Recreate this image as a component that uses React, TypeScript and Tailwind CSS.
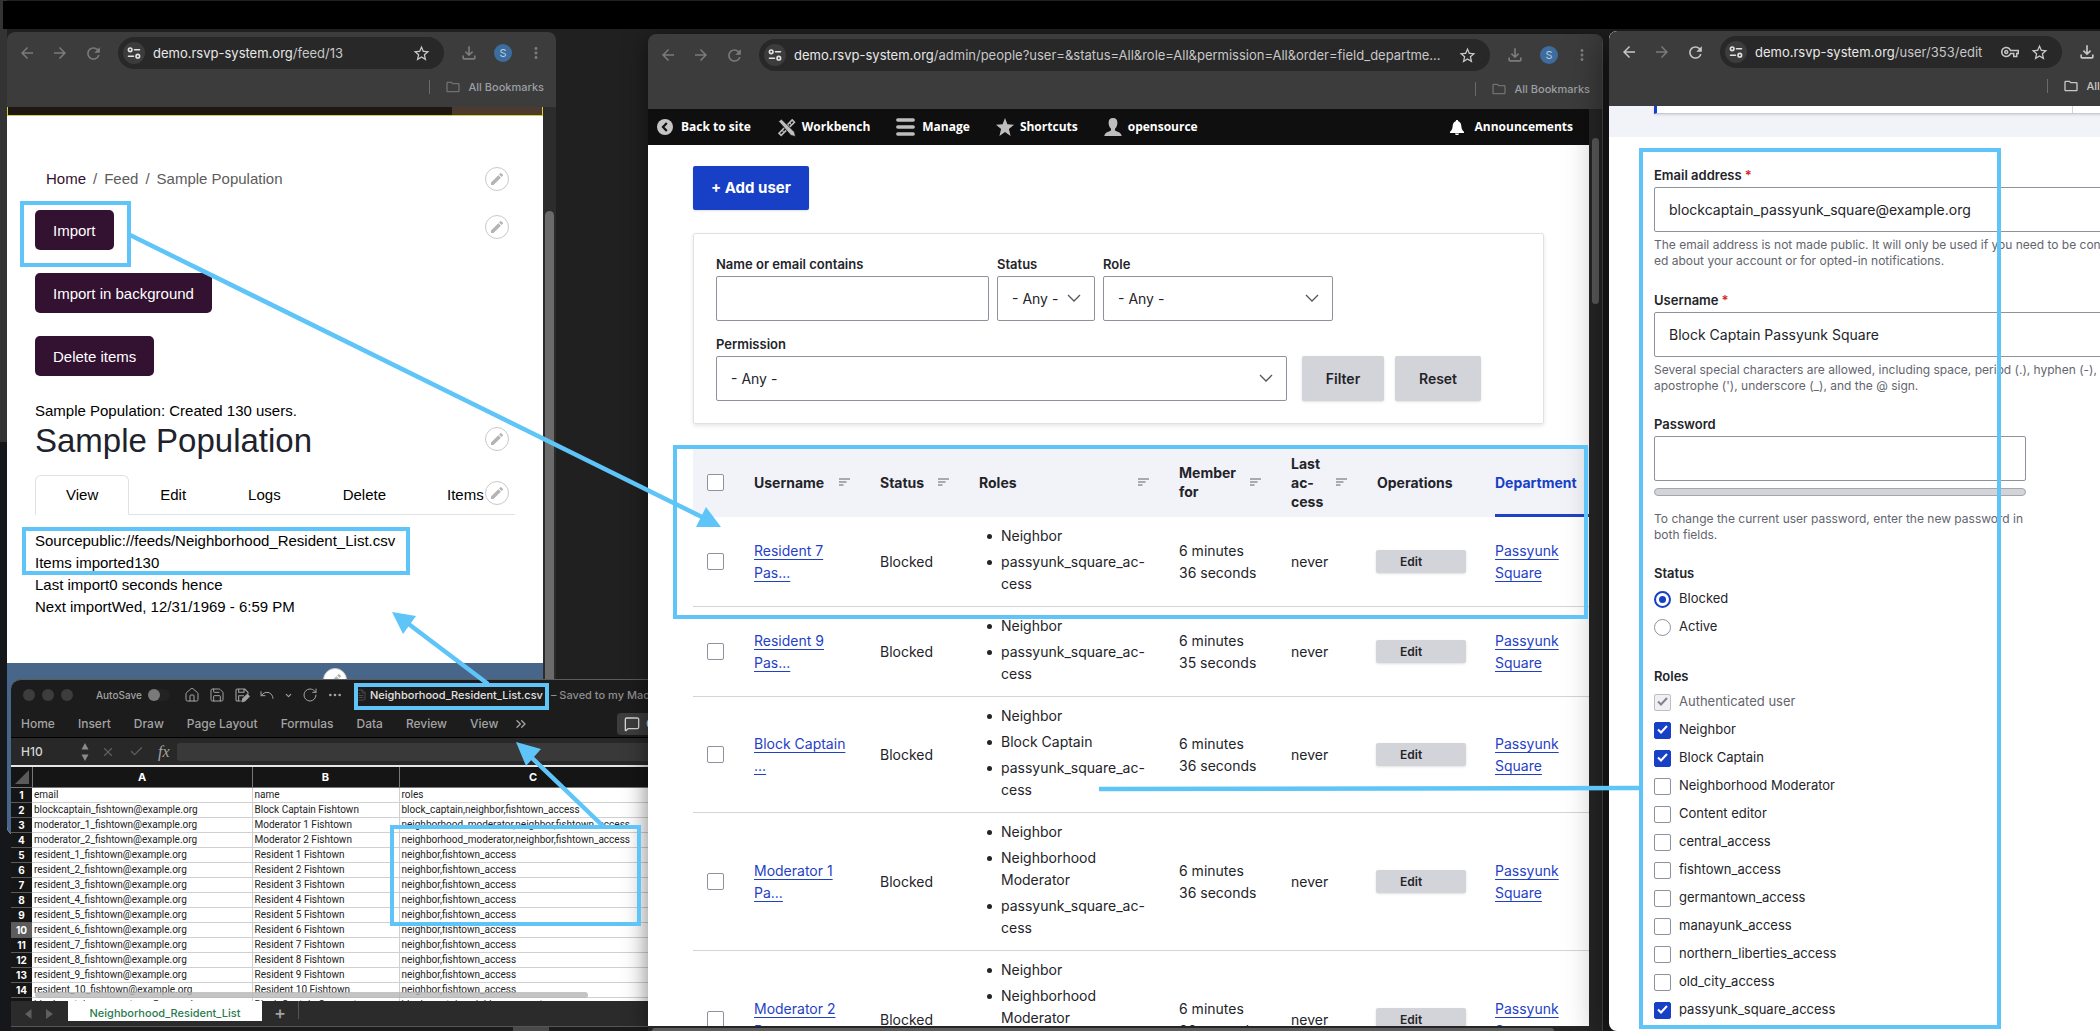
import type { ReactNode } from "react";
import {
    MdArrowBack,
    MdArrowForward,
    MdRefresh,
    MdStarBorder,
    MdOutlineFileDownload,
    MdMoreVert,
    MdOutlineFolder,
    MdOutlineVpnKey,
    MdEdit,
} from "react-icons/md";
import { House, Save, Undo, ChevronDown, RotateCw, Ellipsis, ChevronsRight, MessageSquare, X, Check, FileText } from "lucide-react";

const users = [
    { name: "Resident 7 Pas...", roles: ["Neighbor", "passyunk_square_ac-cess"], member: "6 minutes 36 seconds" },
    { name: "Resident 9 Pas...", roles: ["Neighbor", "passyunk_square_ac-cess"], member: "6 minutes 35 seconds" },
    { name: "Block Captain ...", roles: ["Neighbor", "Block Captain", "passyunk_square_ac-cess"], member: "6 minutes 36 seconds" },
    { name: "Moderator 1 Pa...", roles: ["Neighbor", "Neighborhood Moderator", "passyunk_square_ac-cess"], member: "6 minutes 36 seconds" },
    { name: "Moderator 2 Pa...", roles: ["Neighbor", "Neighborhood Moderator", "passyunk_square_ac-cess"], member: "6 minutes 36 seconds" },
];

const roles = [
    { name: "Authenticated user", checked: true, disabled: true },
    { name: "Neighbor", checked: true },
    { name: "Block Captain", checked: true },
    { name: "Neighborhood Moderator" },
    { name: "Content editor" },
    { name: "central_access" },
    { name: "fishtown_access" },
    { name: "germantown_access" },
    { name: "manayunk_access" },
    { name: "northern_liberties_access" },
    { name: "old_city_access" },
    { name: "passyunk_square_access", checked: true },
];

const sheet = [
    ["email", "name", "roles"],
    ["blockcaptain_fishtown@example.org", "Block Captain Fishtown", "block_captain,neighbor,fishtown_access"],
    ["moderator_1_fishtown@example.org", "Moderator 1 Fishtown", "neighborhood_moderator,neighbor,fishtown_access"],
    ["moderator_2_fishtown@example.org", "Moderator 2 Fishtown", "neighborhood_moderator,neighbor,fishtown_access"],
    ["resident_1_fishtown@example.org", "Resident 1 Fishtown", "neighbor,fishtown_access"],
    ["resident_2_fishtown@example.org", "Resident 2 Fishtown", "neighbor,fishtown_access"],
    ["resident_3_fishtown@example.org", "Resident 3 Fishtown", "neighbor,fishtown_access"],
    ["resident_4_fishtown@example.org", "Resident 4 Fishtown", "neighbor,fishtown_access"],
    ["resident_5_fishtown@example.org", "Resident 5 Fishtown", "neighbor,fishtown_access"],
    ["resident_6_fishtown@example.org", "Resident 6 Fishtown", "neighbor,fishtown_access"],
    ["resident_7_fishtown@example.org", "Resident 7 Fishtown", "neighbor,fishtown_access"],
    ["resident_8_fishtown@example.org", "Resident 8 Fishtown", "neighbor,fishtown_access"],
    ["resident_9_fishtown@example.org", "Resident 9 Fishtown", "neighbor,fishtown_access"],
    ["resident_10_fishtown@example.org", "Resident 10 Fishtown", "neighbor,fishtown_access"],
    ["blockcaptain_germantown@example.org", "Block Captain Germantown", "block_captain,neighbor,germantown_access"],
];

function SiteInfoIcon() {
    return (
        <svg viewBox="0 0 14 14" className="size-[14px]" fill="none" stroke="#e3e3e3" strokeWidth="1.6" strokeLinecap="round">
            <circle cx="3.2" cy="3.8" r="1.8" />
            <path d="M7.5 3.8h5M1.5 10.2h5" />
            <circle cx="10.8" cy="10.2" r="1.8" />
        </svg>
    );
}

function BrowserBar({ path, active, withKey }: { path: string; active?: boolean; withKey?: boolean }) {
    return (
        <header className={`shrink-0 rounded-t-lg bg-[#3c3c3c] pt-[5px] pb-0.5 ${active ? "text-[#c7c7c7]" : "text-[#7b7b7b]"}`}>
            <div className="flex h-8 items-center gap-[15px] px-[11px]">
                <button aria-label="Back"><MdArrowBack size={18} /></button>
                <button aria-label="Forward" className="text-[#7b7b7b]"><MdArrowForward size={18} /></button>
                <button aria-label="Reload"><MdRefresh size={19} /></button>
                <div className="flex h-8 min-w-0 flex-1 items-center rounded-full bg-[#282828] pr-[13px] pl-[5px] text-[#c7c7c7]">
                    <span className="mr-2 flex size-[22px] shrink-0 items-center justify-center rounded-full bg-[#3c3c3c]"><SiteInfoIcon /></span>
                    <p className="min-w-0 flex-1 truncate pt-px text-[13px]">
                        <span className="text-[#e8e8e8]">demo.rsvp-system.org</span>{path}
                    </p>
                    {withKey && <button aria-label="Passwords" className="ml-3"><MdOutlineVpnKey size={18} /></button>}
                    <button aria-label="Bookmark" className="ml-[11px]"><MdStarBorder size={19} /></button>
                </div>
                <button aria-label="Downloads"><MdOutlineFileDownload size={20} /></button>
                <button className="flex size-[18px] shrink-0 items-center justify-center rounded-full bg-[#3d6d9e] text-[11px] text-[#b9cbe0]">S</button>
                <button aria-label="Menu"><MdMoreVert size={18} /></button>
            </div>
            <div className="flex h-9 items-center justify-end pr-3">
                <span className="mr-[15px] h-[14px] w-px bg-[#6a6a6a]"></span>
                <button className={`flex items-center gap-2 text-[11px] font-medium whitespace-nowrap ${active ? "text-[#c7c7c7]" : "text-[#9b9fa3]"}`}>
                    <MdOutlineFolder size={16} className={active ? "text-[#c7c7c7]" : "text-[#707070]"} />
                    All Bookmarks
                </button>
            </div>
        </header>
    );
}

function Pencil({ className }: { className: string }) {
    return (
        <button aria-label="Configure block" className={`flex size-6 shrink-0 items-center justify-center rounded-full border border-[#c9c9c9] bg-white text-[#b4b4b4] ${className}`}>
            <MdEdit size={16} />
        </button>
    );
}

function FeedWindow() {
    const button = "block h-10 rounded-[5px] bg-[#331131] px-[18px] pt-0.5 text-white";
    const tab = "flex items-center px-[31px]";
    return (
        <section className="absolute top-8 left-[7px] flex h-[803px] w-[549px] flex-col overflow-hidden rounded-lg bg-[#2c2c2c] font-['Inter',sans-serif]">
            <BrowserBar path="/feed/13" />
            <div className="flex min-h-0 flex-1">
                <main className="flex min-w-0 flex-1 flex-col bg-white font-['Liberation_Sans',Arial,sans-serif] text-[15px] leading-[22px] text-black">
                    <div className="flex h-[9px] justify-end border-x border-b border-[#d5cf3c] bg-[#1f1712]">
                        <span className="w-[90px] bg-[#4c3a2f]"></span>
                    </div>
                    <div className="px-7">
                        <nav className="mt-[51px] flex h-6 items-center gap-[7px] pl-[11px] text-[#5c5c5c]">
                            <a href="#home" className="text-[#331131]">Home</a>
                            <span>/</span>
                            <span>Feed</span>
                            <span>/</span>
                            <span>Sample Population</span>
                            <Pencil className="mr-[6px] ml-auto" />
                        </nav>
                        <div className="mt-[19px] flex items-start justify-between">
                            <button className={button}>Import</button>
                            <Pencil className="mt-[5px] mr-[6px]" />
                        </div>
                        <button className={`${button} mt-[23px]`}>Import in background</button>
                        <button className={`${button} mt-[23px]`}>Delete items</button>
                        <p className="mt-6">Sample Population: Created 130 users.</p>
                        <div className="flex items-start justify-between">
                            <h1 className="text-[33px] leading-[38px] text-[#20222b]">Sample Population</h1>
                            <Pencil className="mt-[5px] mr-[6px]" />
                        </div>
                        <nav className="relative mt-[15px] flex h-10 border-b border-[#dee2e6]">
                            <a href="#view" className="-mb-px flex items-center rounded-t-md border border-[#dee2e6] border-b-white bg-white px-[30px]">View</a>
                            <a href="#edit" className={tab}>Edit</a>
                            <a href="#logs" className={tab}>Logs</a>
                            <a href="#delete" className={tab}>Delete</a>
                            <a href="#items" className="flex items-center pl-[30px]">Items</a>
                            <Pencil className="absolute top-1.5 right-[6px]" />
                        </nav>
                        <div className="mt-[15px]">
                            <p>Sourcepublic://feeds/Neighborhood_Resident_List.csv</p>
                            <p>Items imported130</p>
                            <p>Last import0 seconds hence</p>
                            <p>Next importWed, 12/31/1969 - 6:59 PM</p>
                        </div>
                    </div>
                    <footer className="mt-[45px] flex flex-1 justify-center bg-[#48658a] pt-[5px] pl-[120px]">
                        <Pencil className="" />
                    </footer>
                </main>
                <div className="w-[13px] px-[2px] pt-[104px]">
                    <div className="h-full rounded-full bg-[#6b6b6b]"></div>
                </div>
            </div>
        </section>
    );
}

function SheetWindow() {
    return (
        <section className="absolute top-[679px] bottom-0 left-[11px] flex w-[656px] flex-col overflow-hidden rounded-t-[10px] border-t border-[#5c5c5c] bg-[#1c1c1c] font-['Inter',sans-serif] text-[12px] font-medium text-[#a3a3a3]">
            <div className="flex h-[30px] shrink-0 items-center pl-3 whitespace-nowrap">
                <div className="flex gap-[7px]">
                    <span className="size-3 rounded-full bg-[#3d3d3d]"></span>
                    <span className="size-3 rounded-full bg-[#3d3d3d]"></span>
                    <span className="size-3 rounded-full bg-[#3d3d3d]"></span>
                </div>
                <label className="ml-[23px] flex w-[88px] items-center gap-1.5 text-[10px]">
                    AutoSave
                    <input type="checkbox" className="h-3 w-[22px] appearance-none rounded-full bg-[#222] before:block before:size-3 before:rounded-full before:bg-[#7a7a7a]" />
                </label>
                <div className="flex items-center gap-[9px]">
                    <House size={16} strokeWidth={1.5} />
                    <Save size={16} strokeWidth={1.5} />
                    <svg viewBox="0 0 24 24" className="size-4" fill="none" stroke="currentColor" strokeWidth="1.6" strokeLinejoin="round">
                        <path d="M10 21H5a2 2 0 0 1-2-2V5a2 2 0 0 1 2-2h11l5 5v3M7 3v5h8V3M7 21v-8h8" />
                        <path d="M12 22l1-4 7-7 3 3-7 7z" fill="currentColor" />
                    </svg>
                    <Undo size={16} strokeWidth={1.5} />
                    <ChevronDown size={9} strokeWidth={3} />
                    <RotateCw size={16} strokeWidth={1.5} />
                    <Ellipsis size={16} />
                </div>
                <FileText size={12} className="ml-3 text-[#4a4a4a]" />
                <span className="ml-[3px] text-[11px] text-[#e2e2e2]">Neighborhood_Resident_List.csv</span>
                <span className="ml-2 text-[11px] text-[#8e8e8e]">– Saved to my Mac</span>
            </div>
            <nav className="flex h-[27px] shrink-0 items-center gap-[23px] pl-[10px] whitespace-nowrap">
                <button>Home</button>
                <button>Insert</button>
                <button>Draw</button>
                <button>Page Layout</button>
                <button>Formulas</button>
                <button>Data</button>
                <button>Review</button>
                <button>View</button>
                <button aria-label="More tabs" className="-ml-2"><ChevronsRight size={16} /></button>
                <button className="ml-auto flex h-[22px] w-[50px] items-center gap-1.5 overflow-hidden rounded-l bg-[#3d3d3d] pl-[7px] text-[#d5d5d5]">
                    <MessageSquare size={16} className="shrink-0" />
                    Comments
                </button>
            </nav>
            <div className="flex h-7 shrink-0 items-center border-t border-black bg-[#282828] pl-[10px]">
                <span className="w-[60px] text-[#d5d5d5]">H10</span>
                <svg viewBox="0 0 8 18" className="h-[18px] w-2" fill="#8a8a8a"><path d="M4 0l3.5 6.5h-7zM4 18l3.5-6.5h-7z" /></svg>
                <X size={14} className="ml-3 text-[#5f5f5f]" />
                <Check size={15} className="ml-3.5 text-[#5f5f5f]" />
                <span className="ml-3.5 font-['Liberation_Serif',serif] text-[16px] italic">fx</span>
                <input aria-label="Formula" className="ml-[7px] h-[18px] flex-1 rounded-[3px] bg-[#393939]" />
            </div>
            <div className="relative min-h-0 flex-1 overflow-hidden border-t-2 border-[#e6e6e6] bg-white">
                <table className="w-full table-fixed border-collapse font-['Roboto',sans-serif] text-[10px] leading-[14px] font-normal text-[#222]">
                    <thead>
                        <tr className="h-5 bg-[#151515] font-['Inter',sans-serif] text-[11px] text-white">
                            <th className="w-[21px] border-r border-b border-[#777]"><svg viewBox="0 0 14 14" className="ml-1 size-[14px]" fill="#5a5a5a"><path d="M14 0v14H0z" /></svg></th>
                            <th className="w-[220px] border-r border-b border-[#777] font-bold">A</th>
                            <th className="w-[147px] border-r border-b border-[#777] font-bold">B</th>
                            <th className="border-b border-[#777] font-bold">C</th>
                        </tr>
                    </thead>
                    <tbody>
                        {sheet.map((row, i) => (
                            <tr key={i} className="h-[15px]">
                                <th className={`border-b border-[#5a5a5a] font-['Inter',sans-serif] font-bold text-white ${i === 9 ? "bg-[#5c5c5c]" : "bg-[#151515]"}`}>{i + 1}</th>
                                {row.map((cell, j) => (
                                    <td key={j} className="border-r border-b border-[#d0d0d0] pl-0.5 whitespace-nowrap">{cell}</td>
                                ))}
                            </tr>
                        ))}
                    </tbody>
                </table>
                <div className="absolute bottom-[3px] left-6 h-[6px] w-[553px] rounded-full bg-[#b5b5b5]/80"></div>
            </div>
            <div className="flex h-[25px] shrink-0 items-start bg-[#2b2b2b]">
                <svg viewBox="0 0 28 10" className="mt-2 ml-[14px] h-[10px] w-7" fill="#5f5f5f"><path d="M6.5 0v10L0 5zM21 0v10l7-5z" /></svg>
                <button className="ml-[15px] h-5 w-[194px] bg-white pt-1 text-[11px] text-[#2c7a4f]">Neighborhood_Resident_List</button>
                <button className="ml-3 h-6 text-[18px] leading-6">+</button>
                <span className="ml-3 h-[18px] w-px bg-[#555]"></span>
            </div>
            <div className="flex h-[5px] shrink-0 justify-end border-t border-[#555] bg-[#1c1c1c] pr-[118px]">
                <span className="w-9 bg-[#4a4a4a]"></span>
            </div>
        </section>
    );
}

function SelectBox({ id, label, className }: { id: string; label: string; className: string }) {
    return (
        <div className={className}>
            <label htmlFor={id} className="block text-[13px] leading-6 font-semibold">{label}</label>
            <div className="relative">
                <select id={id} className="h-[45px] w-full appearance-none rounded-[2px] border border-[#8e929c] bg-white px-3.5 text-[14px]">
                    <option>- Any -</option>
                </select>
                <svg viewBox="0 0 14 8" className="pointer-events-none absolute top-[18px] right-[14px] h-2 w-[14px]" fill="none" stroke="#545560" strokeWidth="1.3"><path d="M1 1l6 6 6-6" /></svg>
            </div>
        </div>
    );
}

function HeadCell({ children, sortable, className }: { children: ReactNode; sortable?: boolean; className: string }) {
    return (
        <th className={`h-[70px] px-[15px] text-left font-bold ${className}`}>
            <div className="flex items-center justify-between">
                <span>{children}</span>
                {sortable && (
                    <svg viewBox="0 0 11 8" className="h-2 w-[11px]" stroke="#8e929c" strokeWidth="1.4"><path d="M0 1h11M0 4h7.5M0 7h4.5" /></svg>
                )}
            </div>
        </th>
    );
}

function PeopleWindow() {
    const box = "block size-[17px] appearance-none rounded-[2px] border border-[#8e929c] bg-white";
    const link = "text-[#1f41c5] underline underline-offset-[3px]";
    return (
        <section className="absolute top-[34px] bottom-0 left-[648px] flex w-[955px] flex-col overflow-hidden rounded-t-lg border-r border-[#4a4a4a] bg-[#262626] font-['Inter',sans-serif] text-[#232429] shadow-[0_4px_24px_rgba(0,0,0,0.5)]">
            <BrowserBar path="/admin/people?user=&status=All&role=All&permission=All&order=field_departme..." />
            <div className="flex min-h-0 flex-1">
                <div className="flex min-w-0 flex-1 flex-col overflow-hidden bg-white">
                    <nav className="flex h-9 shrink-0 items-center bg-[#0f0f0f] pr-4 pl-[9px] font-['Open_Sans','Noto_Sans',sans-serif] text-[12px] font-bold text-white">
                        <a href="#site" className="flex items-center gap-2">
                            <svg viewBox="0 0 16 16" className="size-4"><circle cx="8" cy="8" r="8" fill="#c4c4c4" /><path d="M9.8 4L6 8l3.8 4" fill="none" stroke="#0f0f0f" strokeWidth="2.2" /></svg>
                            Back to site
                        </a>
                        <a href="#workbench" className="ml-[26px] flex items-center gap-[6px]">
                            <svg viewBox="0 0 19 19" className="size-[19px]" fill="none" stroke="#bebebe">
                                <path d="M2 15.2L15.2 2l2.2 2.2L4.2 17.4z" strokeWidth="1.6" />
                                <path d="M12.5 4.7l1.6 1.6M10.5 6.7l1.6 1.6M5 12.2l1.6 1.6" strokeWidth="1.2" />
                                <path d="M1.5 3.2l3-2L17.5 14l1 4.5-4.5-1z" fill="#bebebe" stroke="#0f0f0f" strokeWidth="0.8" />
                            </svg>
                            Workbench
                        </a>
                        <a href="#manage" className="ml-[26px] flex items-center gap-[7px]">
                            <svg viewBox="0 0 19 18" className="h-[18px] w-[19px]" stroke="#bebebe" strokeWidth="3.4" strokeLinecap="round"><path d="M1.8 2h15.4M1.8 9h15.4M1.8 16h15.4" /></svg>
                            Manage
                        </a>
                        <a href="#shortcuts" className="ml-[26px] flex items-center gap-[6px]">
                            <svg viewBox="0 0 18 18" className="size-[18px]" fill="#bebebe"><path d="M9 0l2.4 6.3 6.6.4-5.1 4.2L14.6 18 9 14.1 3.4 18l1.7-7.1L0 6.7l6.6-.4z" /></svg>
                            Shortcuts
                        </a>
                        <a href="#account" className="ml-[26px] flex items-center gap-[6px]">
                            <svg viewBox="0 0 18 18" className="size-[18px]" fill="#bebebe"><path d="M9 0c3 0 4.4 2 4.4 4.8 0 2.500-1 4.600-2.200 5.700-.5.600-.3 2 .5 2.400 2.300 1 5.700 1.500 6 5.100H.3c.3-3.600 3.700-4.100 6-5.100.8-.4 1-1.800.5-2.400C5.600 9.400 4.600 7.300 4.600 4.800 4.600 2 6 0 9 0z" /></svg>
                            opensource
                        </a>
                        <a href="#announcements" className="ml-auto flex items-center gap-[11px]">
                            <svg viewBox="0 0 14 15" className="h-[15px] w-[14px]" fill="#fff"><path d="M7 0c.8 0 1.200.5 1.200 1.200C10.600 2 11.200 4 11.400 6.500c.2 2.500.9 4 2.600 5.200V13H0v-1.300c1.700-1.200 2.400-2.700 2.600-5.200C2.800 4 3.400 2 5.800 1.200 5.800.5 6.200 0 7 0zM5 13.500h4c0 1-.9 1.500-2 1.500s-2-.5-2-1.500z" /></svg>
                            Announcements
                        </a>
                    </nav>
                    <main className="shrink-0 pt-[21px] pl-[45px]">
                        <button className="h-11 rounded-[2px] bg-[#1740c6] px-[18px] text-[15px] font-bold text-white shadow-sm">+ Add user</button>
                        <form className="mt-[23px] mr-[45px] rounded-[2px] border border-[#e0e1e4] px-[22px] pt-[18px] pb-[22px] shadow-[0_2px_4px_rgba(0,0,0,0.1)]">
                            <div className="flex gap-2">
                                <div className="w-[273px]">
                                    <label htmlFor="name" className="block text-[13px] leading-6 font-semibold">Name or email contains</label>
                                    <input id="name" className="h-[45px] w-full rounded-[2px] border border-[#8e929c] px-3.5 text-[14px]" />
                                </div>
                                <SelectBox id="status" label="Status" className="w-[98px]" />
                                <SelectBox id="role" label="Role" className="w-[230px]" />
                            </div>
                            <div className="mt-[11px] flex items-end">
                                <SelectBox id="permission" label="Permission" className="w-[571px]" />
                                <button type="button" className="ml-[15px] h-[45px] w-[82px] rounded-[2px] bg-[#d3d4d9] text-[14px] font-semibold shadow-sm">Filter</button>
                                <button type="button" className="ml-[11px] h-[45px] w-[86px] rounded-[2px] bg-[#d3d4d9] text-[14px] font-semibold shadow-sm">Reset</button>
                            </div>
                        </form>
                        <table className="mt-[23px] w-[935px] table-fixed border-collapse text-[14px] leading-[22px]">
                            <thead className="bg-[#f2f3f9] leading-[19px]">
                                <tr>
                                    <th className="w-[46px] pl-[14px]"><input type="checkbox" aria-label="Select all" className={box} /></th>
                                    <HeadCell sortable className="w-[126px]">Username</HeadCell>
                                    <HeadCell sortable className="w-[99px]">Status</HeadCell>
                                    <HeadCell sortable className="w-[200px]">Roles</HeadCell>
                                    <HeadCell sortable className="w-[112px]">Member<br />for</HeadCell>
                                    <HeadCell sortable className="w-[86px]">Last<br />ac-<br />cess</HeadCell>
                                    <HeadCell className="w-[118px]">Operations</HeadCell>
                                    <th className="px-[15px] text-left font-bold text-[#1740c6]">
                                        <a href="#department" className="flex h-[70px] items-center border-b-3 border-[#1f41c5] pt-[3px]">Department</a>
                                    </th>
                                </tr>
                            </thead>
                            <tbody>
                                {users.map((user) => (
                                    <tr key={user.name} className="border-b border-[#d3d4d9]">
                                        <td className="pl-[14px]"><input type="checkbox" aria-label={user.name} className={box} /></td>
                                        <td className="px-[15px]"><a href="#user" className={link}>{user.name}</a></td>
                                        <td className="px-[15px]">Blocked</td>
                                        <td className="pt-2 pr-3 pb-[11px] pl-[15px]">
                                            <ul className="space-y-1 pl-[22px]">
                                                {user.roles.map((role) => (
                                                    <li key={role} className="relative before:absolute before:top-[9px] before:-left-[14px] before:size-[5px] before:rounded-full before:bg-[#232429]">
                                                        {role.includes("-") ? <>passyunk_square_ac-<br />cess</> : role}
                                                    </li>
                                                ))}
                                            </ul>
                                        </td>
                                        <td className="px-[15px]">{user.member}</td>
                                        <td className="px-[15px]">never</td>
                                        <td className="px-[14px]"><button className="block h-[23px] w-full rounded-[2px] bg-[#d3d4d9] pl-6 text-left text-[12px] font-semibold shadow-sm">Edit</button></td>
                                        <td className="pr-12 pl-[15px]"><a href="#department" className={link}>Passyunk Square</a></td>
                                    </tr>
                                ))}
                            </tbody>
                        </table>
                    </main>
                </div>
                <div className="w-[13px] px-[3px] pt-[29px]">
                    <div className="h-[166px] rounded-full bg-[#5c5c5c]"></div>
                </div>
            </div>
            <div className="h-[5px] shrink-0 pt-0.5 pr-12 pl-1">
                <div className="h-full rounded-t bg-[#5c5c5c]"></div>
            </div>
        </section>
    );
}

function UserWindow() {
    const label = "block text-[13px] leading-6 font-semibold";
    const input = "block h-[45px] rounded-[2px] border border-[#8e929c] px-3.5 text-[14px]";
    const help = "text-[12px] leading-4 whitespace-nowrap text-[#63656e]";
    return (
        <section className="absolute top-[31px] bottom-0 left-[1609px] flex w-[565px] flex-col overflow-hidden rounded-t-lg rounded-b-lg bg-white font-['Inter',sans-serif] text-[#232429] shadow-[0_8px_40px_rgba(0,0,0,0.6)]">
            <BrowserBar path="/user/353/edit" active withKey />
            <div className="h-[31px] shrink-0 bg-[#f2f3f9] pl-[45px]">
                <div className="flex h-2 border-b border-l-3 border-b-[#c9cbd2] border-l-[#1740c6] bg-white shadow">
                    <span className="w-[416px] border-r border-[#d3d4d9]"></span>
                </div>
            </div>
            <form className="pt-[26px] pl-[45px]">
                <label htmlFor="mail" className={label}>Email address<span className="ml-[3px] text-[#d72222]">*</span></label>
                <input id="mail" defaultValue="blockcaptain_passyunk_square@example.org" className={`${input} w-full`} />
                <p className={`${help} mt-[5px]`}>The email address is not made public. It will only be used if you need to be contact-<br />ed about your account or for opted-in notifications.</p>
                <label htmlFor="username" className={`${label} mt-[19px]`}>Username<span className="ml-[3px] text-[#d72222]">*</span></label>
                <input id="username" defaultValue="Block Captain Passyunk Square" className={`${input} w-full`} />
                <p className={`${help} mt-[5px]`}>Several special characters are allowed, including space, period (.), hyphen (-),<br />apostrophe ('), underscore (_), and the @ sign.</p>
                <label htmlFor="password" className={`${label} mt-[18px]`}>Password</label>
                <input id="password" type="password" className={`${input} w-[372px]`} />
                <div className="mt-[7px] h-2 w-[372px] rounded-full border border-[#a4a6ae] bg-[#d3d4d9]"></div>
                <p className={`${help} mt-[15px]`}>To change the current user password, enter the new password in<br />both fields.</p>
                <fieldset className="mt-[18px] text-[13px]">
                    <legend className={label}>Status</legend>
                    {["Blocked", "Active"].map((status) => (
                        <label key={status} className="flex h-7 items-center gap-2">
                            <input type="radio" name="status" defaultChecked={status === "Blocked"} className="size-[17px] appearance-none rounded-full border border-[#8e929c] p-1 checked:border-2 checked:border-[#1740c6] checked:bg-[#1740c6] checked:bg-clip-content checked:p-[3px]" />
                            {status}
                        </label>
                    ))}
                </fieldset>
                <fieldset className="mt-[23px] text-[13px]">
                    <legend className={label}>Roles</legend>
                    {roles.map((role) => (
                        <label key={role.name} className={`relative flex h-7 items-center gap-2 ${role.disabled ? "text-[#63656e]" : ""}`}>
                            <input type="checkbox" defaultChecked={role.checked} disabled={role.disabled} className="size-[17px] appearance-none rounded-[2px] border border-[#8e929c] checked:border-[#1740c6] checked:bg-[#1740c6] disabled:border-[#bcbec4] disabled:bg-[#f0f0f2]" />
                            {role.checked && (
                                <svg viewBox="0 0 11 9" className="absolute top-[9px] left-[3px] h-[9px] w-[11px]" fill="none" stroke={role.disabled ? "#82828c" : "#fff"} strokeWidth="2"><path d="M1 4.500l3 3L10 1" /></svg>
                            )}
                            {role.name}
                        </label>
                    ))}
                </fieldset>
            </form>
        </section>
    );
}

// Blue call-outs that link the windows together
function Annotations() {
    const box = "absolute border-4 border-[#5fc4f8]";
    return (
        <div className="pointer-events-none absolute inset-0">
            <div className={`${box} top-[201px] left-5 h-[66px] w-[111px]`}></div>
            <div className={`${box} top-[527px] left-[22px] h-12 w-[388px]`}></div>
            <div className={`${box} top-[683px] left-[354px] h-[27px] w-[195px]`}></div>
            <div className={`${box} top-[825px] left-[390px] h-[101px] w-[251px]`}></div>
            <div className={`${box} top-[445px] left-[673px] h-[174px] w-[915px]`}></div>
            <div className={`${box} top-[148px] left-[1639px] h-[881px] w-[362px]`}></div>
            <svg width="2100" height="1031" viewBox="0 0 2100 1031" className="absolute top-0 left-0 max-w-none" fill="#5fc4f8" stroke="#5fc4f8">
                <path d="M130 235L702 517M488 684L406 622M604 827L530 756M1099 789L1639 788" strokeWidth="4.5" />
                <path d="M721 527l-15-20-10 20zM392 612l24 4-13 18zM516 742l25 7-15 17z" stroke="none" />
            </svg>
        </div>
    );
}

export default function App() {
    return (
        <div className="relative h-screen w-full overflow-hidden bg-[#202020]">
            <div className="absolute top-0 left-0 h-[442px] w-[7px] bg-[#333]"></div>
            <div className="absolute bottom-0 left-0 h-[589px] w-[11px] bg-[#15171a]"></div>
            <FeedWindow />
            <SheetWindow />
            <PeopleWindow />
            <UserWindow />
            <div className="absolute top-px right-0 left-[3px] h-7 bg-black"></div>
            <Annotations />
        </div>
    );
}
